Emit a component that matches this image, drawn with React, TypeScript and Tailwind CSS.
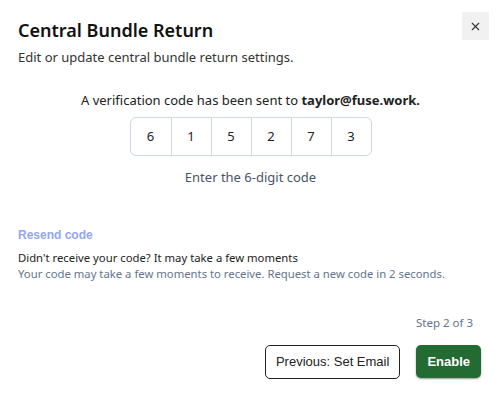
import { X } from 'lucide-react'

const digits = ['6', '1', '5', '2', '7', '3']

const App = () => {
  return (
    <div className="w-[501px] h-[398px] bg-white font-['Noto_Sans',sans-serif] text-[#1f1f1f]">
      <div className="flex items-start justify-between pl-[18px] pr-[12px] pt-[12px]">
        <div className="pt-[4px]">
          <h2 className="text-[18px] leading-[28px] font-semibold text-[#111]">Central Bundle Return</h2>
          <p className="mt-[3px] text-[13px] leading-[20px] text-[#333]">
            Edit or update central bundle return settings.
          </p>
        </div>
        <button className="w-[27px] h-[28px] flex items-center justify-center bg-[#f1f1f1] rounded-[2px] text-[#333]">
          <X size={13} strokeWidth={2} />
        </button>
      </div>

      <div className="flex flex-col items-center mt-[23px]">
        <p className="text-[13px] leading-[20px] text-[#222]">
          A verification code has been sent to <span className="font-bold">taylor@fuse.work.</span>
        </p>
        <div className="mt-[7px] flex border border-[#cfd8e3] rounded-[6px] overflow-hidden">
          {digits.map((d, i) => (
            <div
              key={i}
              className={`w-[40px] h-[37px] flex items-center justify-center text-[13px] text-[#222] ${
                i > 0 ? 'border-l border-[#cfd8e3]' : ''
              }`}
            >
              {d}
            </div>
          ))}
        </div>
        <p className="mt-[11px] text-[13px] leading-[20px] text-[#475569]">Enter the 6-digit code</p>
      </div>

      <div className="px-[18px] mt-[40px]">
        <button className="block text-[12px] leading-[16px] font-bold text-[#93a5f5] font-['Liberation_Sans',sans-serif]">
          Resend code
        </button>
        <p className="mt-[7px] text-[11.3px] leading-[16px] text-[#222]">Didn't receive your code? It may take a few moments</p>
        <p className="text-[11.3px] leading-[16px] text-[#64748b]">
          Your code may take a few moments to receive. Request a new code in 2 seconds.
        </p>
      </div>

      <div className="flex justify-end pr-[28px] mt-[33px]">
        <span className="text-[11.5px] leading-[16px] text-[#64748b]">Step 2 of 3</span>
      </div>

      <div className="flex justify-end gap-[16px] pr-[20px] mt-[14px] font-['Liberation_Sans',sans-serif]">
        <button className="h-[34px] px-[10px] border border-[#222] rounded-[5px] bg-white text-[13px] text-[#222]">
          Previous: Set Email
        </button>
        <button className="h-[33px] px-[11px] rounded-[5px] bg-[#236b33] text-white text-[13px] font-bold shadow-[0_1px_2px_rgba(0,0,0,0.4)]">
          Enable
        </button>
      </div>
    </div>
  )
}

export default App
